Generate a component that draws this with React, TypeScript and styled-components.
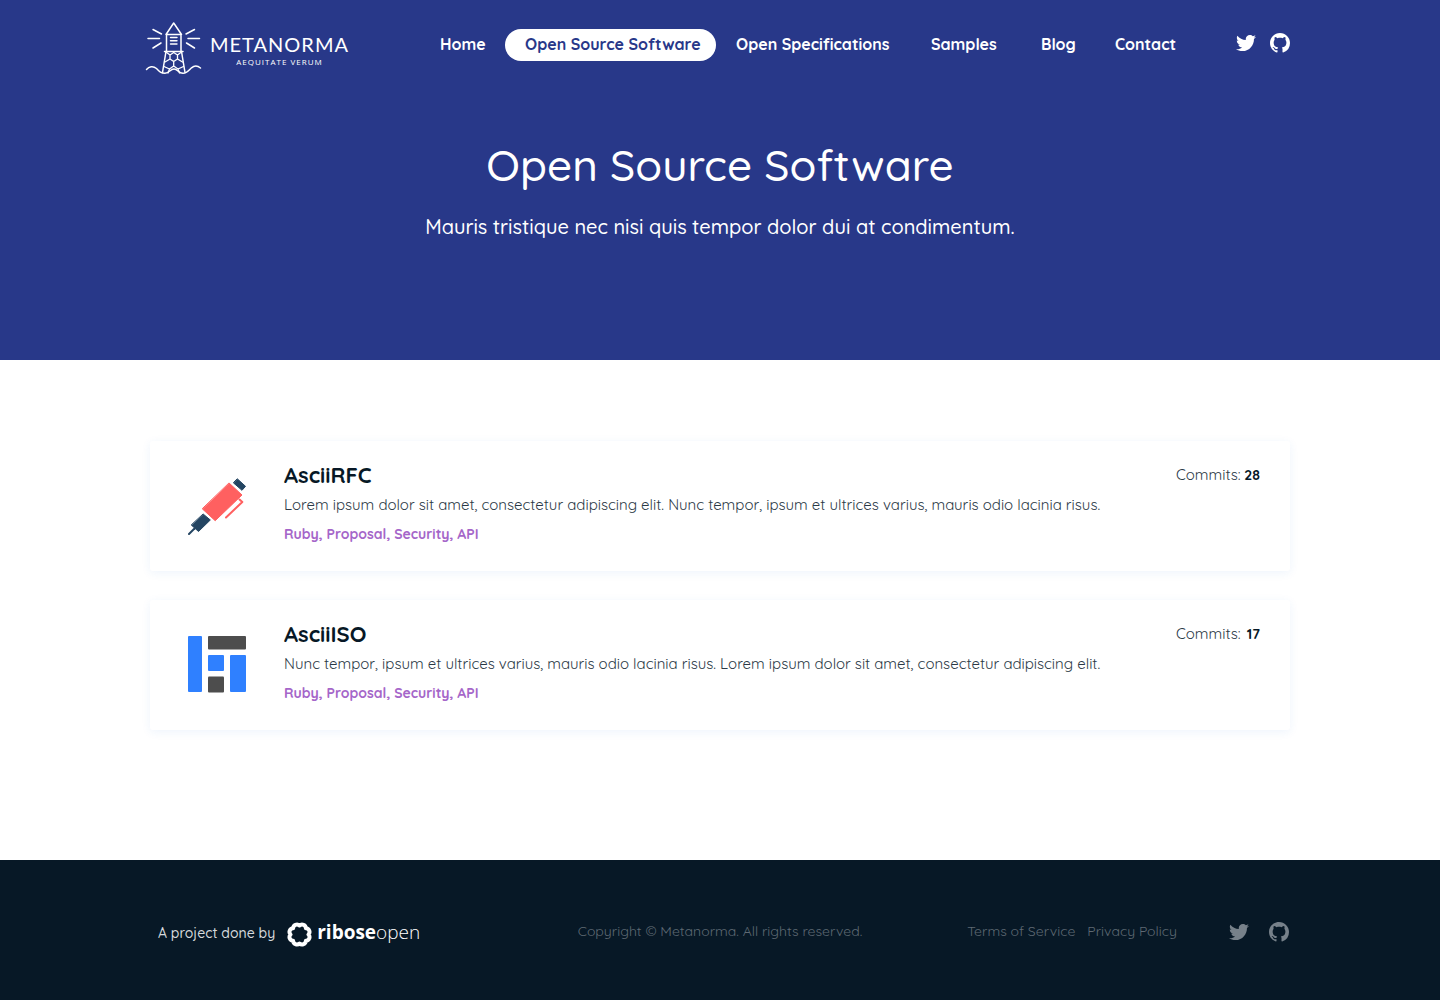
import React from 'react';
import styled, { createGlobalStyle, css } from 'styled-components';
import { FaTwitter } from 'react-icons/fa';

const sans = '"Quicksand", "Inter", "Liberation Sans", sans-serif';

const GlobalStyle = createGlobalStyle`
  *, *::before, *::after { box-sizing: border-box; }
  body { margin: 0; background: #fff; font-family: ${sans}; color: #071826; }
  h1, h2, p, ul { margin: 0; padding: 0; }
  a { color: inherit; text-decoration: none; }
`;

const Page = styled.div`
  min-height: 100vh;
  display: flex;
  flex-direction: column;
`;

const Container = styled.div`
  width: 100%;
  max-width: 1140px;
  margin: 0 auto;
`;

const Hero = styled.header`
  background: #283889;
  color: #fff;
  padding: 20px 16px 120px;
`;

const TopBar = styled(Container)`
  display: flex;
  align-items: flex-start;
`;

const Brand = styled.a`
  display: flex;
  gap: 8px;
`;

const Lighthouse = styled.svg`
  width: 52px;
  height: 56px;
  flex: none;
  overflow: visible;
  fill: none;
  stroke: #fff;
  stroke-width: 1.5;
  stroke-linecap: round;
  stroke-linejoin: round;
`;

const BrandText = styled.span`
  display: flex;
  flex-direction: column;
  align-items: center;
  padding-top: 12px;
`;

const BrandName = styled.span`
  font: 400 20px/24px "Lato", sans-serif;
  letter-spacing: 1px;
`;

const BrandMotto = styled.span`
  font: 400 8px/12px "Open Sans", sans-serif;
  letter-spacing: 1px;
`;

const Nav = styled.nav`
  display: grid;
  grid-template-columns: 85px 211px 195px 110px 74px 100px;
  margin-left: auto;
  padding-top: 9px;
`;

const NavLink = styled.a<{ $active?: boolean }>`
  padding: 0 0 2px 20px;
  border-radius: 16px;
  font-size: 16px;
  line-height: 30px;
  font-weight: 700;
  white-space: nowrap;
  ${(p) => p.$active && css`background: #fff; color: #283889;`}
`;

const Social = styled.div<{ $gap: number }>`
  display: flex;
  align-items: center;
  gap: ${(p) => p.$gap}px;
  a { display: block; height: 20px; }
  svg { display: block; width: 20px; height: 20px; fill: currentColor; }
`;

const TopSocial = styled(Social)`
  margin-left: 41px;
  padding-top: 13px;
`;

const HeroTitle = styled.h1`
  margin-top: 60px;
  font-size: 44px;
  line-height: 58px;
  font-weight: 500;
  text-align: center;
`;

const HeroLead = styled.p`
  margin-top: 20px;
  font-size: 20px;
  line-height: 26px;
  font-weight: 500;
  text-align: center;
`;

const Main = styled.main`
  flex: 1;
  padding: 81px 16px 130px;
`;

const ProjectList = styled(Container)`
  display: grid;
  gap: 29px;
`;

const Card = styled.article`
  display: grid;
  grid-template-columns: 58px 1fr auto;
  column-gap: 38px;
  min-height: 130px;
  padding: 20px 30px 20px 38px;
  border-radius: 3px;
  background: #fff;
  box-shadow: 0 2px 10px rgba(40, 110, 220, 0.08);
`;

const ProjectIcon = styled.svg`
  width: 58px;
  height: 58px;
  margin-top: 16px;
`;

const ProjectName = styled.h2`
  font-size: 22px;
  line-height: 28px;
  font-weight: 700;
`;

const ProjectText = styled.p`
  margin-top: 4px;
  font-size: 15px;
  line-height: 24px;
  font-weight: 400;
  color: #2b3946;
`;

const Tags = styled.p`
  margin-top: 8px;
  font-size: 14px;
  line-height: 18px;
  font-weight: 700;
  color: #a566c9;
`;

const Commits = styled.p`
  display: flex;
  justify-content: space-between;
  align-items: baseline;
  min-width: 84px;
  align-self: start;
  padding-top: 4px;
  font-size: 15px;
  line-height: 20px;
  font-weight: 400;
  color: #2b3946;
  b { font-size: 14px; font-weight: 700; color: #071826; }
`;

const Footer = styled.footer`
  background: #071826;
  padding: 57px 16px 53px;
`;

const FooterBar = styled(Container)`
  display: grid;
  grid-template-columns: 1fr auto 1fr;
  align-items: center;
  color: #5e6973;
  font-size: 14px;
  line-height: 20px;
  font-weight: 400;
`;

const Credit = styled.div`
  display: flex;
  align-items: center;
  gap: 12px;
  padding-left: 8px;
  color: #d5d9dc;
  font-weight: 500;
`;

const CreditLabel = styled.span`
  padding-top: 2px;
`;

const Copyright = styled.p`
  padding-bottom: 2px;
`;

const Ribose = styled.a`
  display: flex;
  align-items: flex-end;
  gap: 5px;
  color: #fff;
  font: 300 19px/30px "Open Sans", sans-serif;
  b { font-weight: 700; }
  svg { width: 25px; height: 25px; }
`;

const FooterRight = styled.div`
  display: flex;
  align-items: center;
  justify-content: flex-end;
  gap: 52px;
  padding-right: 1px;
`;

const Legal = styled.div`
  display: flex;
  gap: 12px;
  padding-bottom: 2px;
`;

const FooterSocial = styled(Social)`
  color: #77818a;
`;

function GithubMark() {
  return (
    <svg viewBox="0 0 16 16" aria-hidden="true">
      <path d="M8 0C3.58 0 0 3.58 0 8c0 3.54 2.29 6.53 5.47 7.59.4.07.55-.17.55-.38 0-.19-.01-.82-.01-1.49-2.01.37-2.53-.49-2.69-.94-.09-.23-.48-.94-.82-1.13-.28-.15-.68-.52-.01-.53.63-.01 1.08.58 1.23.82.72 1.21 1.87.87 2.33.66.07-.52.28-.87.51-1.07-1.78-.2-3.64-.89-3.64-3.95 0-.87.31-1.59.82-2.15-.08-.2-.36-1.02.08-2.12 0 0 .67-.21 2.2.82.64-.18 1.32-.27 2-.27s1.36.09 2 .27c1.53-1.04 2.2-.82 2.2-.82.44 1.1.16 1.92.08 2.12.51.56.82 1.27.82 2.15 0 3.07-1.87 3.75-3.65 3.95.29.25.54.73.54 1.48 0 1.07-.01 1.93-.01 2.2 0 .21.15.46.55.38A8.01 8.01 0 0 0 16 8c0-4.42-3.58-8-8-8z" />
    </svg>
  );
}

function SocialLinks() {
  return (
    <>
      <a href="#twitter" aria-label="Twitter"><FaTwitter /></a>
      <a href="#github" aria-label="GitHub"><GithubMark /></a>
    </>
  );
}

function LighthouseLogo() {
  return (
    <Lighthouse viewBox="0 0 52 56" aria-hidden="true">
      <path d="M16 14.500L23.700 3L31.500 14.500ZM16.500 14.500V31.500M31 14.500V31.500M14.500 31.500H33" />
      <path d="M20.500 17.500H27M20.500 20.700H27M20.500 24H27" strokeWidth="1.400" />
      <path d="M16 31.500L12.500 52.500M31.500 31.500L35 52.500" />
      <path d="M16 32L20 35V39L15 42M31.500 32L27.500 35V39L32.500 42M20 35L23.700 32.500L27.500 35M20 39L23.700 41.500L27.500 39M23.700 41.500V46L19.500 49L14 46.500M23.700 46L28 49L33.500 46.500M19.500 49L18 53M28 49L29.500 53" strokeWidth="1.300" />
      <path d="M3 9.500L11.500 14M-2 18.500H9.500M3 28L11 23M44.500 9.500L36 14M49.500 18.500H38M44.500 28L36.500 23" />
      <path d="M-3.500 49.500C-1 46.500 3 45.500 6.500 48.500C10 52 11 53.300 15 53.300C19.500 53.300 20 49 24 49C28 49 28 53.300 33 53.300C37 53.300 39 50 41.500 47.800C44.500 45.300 47.500 45.500 50.500 48" />
    </Lighthouse>
  );
}

function PenIcon() {
  return (
    <ProjectIcon viewBox="0 0 58 58" aria-hidden="true" strokeLinejoin="round" strokeLinecap="round">
      <g fill="#244562" stroke="#244562">
        <path d="M49.500 2L57.500 9.300L54 13.300L45.600 6Z" />
        <path d="M15.400 37.200L22.300 43L10.500 54.500L3.500 48.200Z" />
        <path d="M1 57L6.500 51.500" strokeWidth="2" />
      </g>
      <path d="M41.300 6.200L54 18L27.200 43.700L14.500 32Z" fill="#ff6060" stroke="#ff6060" />
      <path d="M51.500 22.500L54.300 25L38 40.500" fill="none" stroke="#ff6060" strokeWidth="2" />
    </ProjectIcon>
  );
}

function BlocksIcon() {
  return (
    <ProjectIcon viewBox="0 0 58 58" aria-hidden="true">
      <g fill="#2f80ff">
        <rect x="0" y="0" width="14" height="56" rx="1" />
        <rect x="20" y="19" width="16" height="16" rx="1" />
        <rect x="42" y="19" width="16" height="37" rx="1" />
      </g>
      <g fill="#4d4d4d">
        <rect x="20" y="0" width="38" height="13.500" rx="1" />
        <rect x="20" y="40.500" width="16" height="16" rx="1" />
      </g>
    </ProjectIcon>
  );
}

function RiboseMark() {
  const point = (i: number) => {
    const a = (Math.PI / 4) * i;
    return `${12.5 + Math.cos(a) * 9} ${12.5 + Math.sin(a) * 9}`;
  };
  const ring = `M${point(0)}` + [1, 2, 3, 4, 5, 6, 7, 8].map((i) => `A3.800 3.800 0 0 1 ${point(i)}`).join('') + 'Z';
  return (
    <svg viewBox="0 0 25 25" aria-hidden="true">
      <path d={ring} fill="none" stroke="#fff" strokeWidth="4" strokeLinejoin="round" />
    </svg>
  );
}

const navItems = ['Home', 'Open Source Software', 'Open Specifications', 'Samples', 'Blog', 'Contact'];

const projects = [
  {
    name: 'AsciiRFC',
    text: 'Lorem ipsum dolor sit amet, consectetur adipiscing elit. Nunc tempor, ipsum et ultrices varius, mauris odio lacinia risus.',
    commits: 28,
    icon: <PenIcon />,
  },
  {
    name: 'AsciiISO',
    text: 'Nunc tempor, ipsum et ultrices varius, mauris odio lacinia risus. Lorem ipsum dolor sit amet, consectetur adipiscing elit.',
    commits: 17,
    icon: <BlocksIcon />,
  },
];

export default function App() {
  return (
    <Page>
      <GlobalStyle />
      <Hero>
        <TopBar>
          <Brand href="#home">
            <LighthouseLogo />
            <BrandText>
              <BrandName>METANORMA</BrandName>
              <BrandMotto>AEQUITATE VERUM</BrandMotto>
            </BrandText>
          </Brand>
          <Nav>
            {navItems.map((item) => (
              <NavLink key={item} href="#nav" $active={item === 'Open Source Software'}>{item}</NavLink>
            ))}
          </Nav>
          <TopSocial $gap={14}><SocialLinks /></TopSocial>
        </TopBar>
        <HeroTitle>Open Source Software</HeroTitle>
        <HeroLead>Mauris tristique nec nisi quis tempor dolor dui at condimentum.</HeroLead>
      </Hero>
      <Main>
        <ProjectList>
          {projects.map((p) => (
            <Card key={p.name}>
              {p.icon}
              <div>
                <ProjectName>{p.name}</ProjectName>
                <ProjectText>{p.text}</ProjectText>
                <Tags>Ruby, Proposal, Security, API</Tags>
              </div>
              <Commits>Commits: <b>{p.commits}</b></Commits>
            </Card>
          ))}
        </ProjectList>
      </Main>
      <Footer>
        <FooterBar>
          <Credit>
            <CreditLabel>A project done by</CreditLabel>
            <Ribose href="#ribose"><RiboseMark /><span><b>ribose</b>open</span></Ribose>
          </Credit>
          <Copyright>Copyright © Metanorma. All rights reserved.</Copyright>
          <FooterRight>
            <Legal><a href="#terms">Terms of Service</a><a href="#privacy">Privacy Policy</a></Legal>
            <FooterSocial $gap={20}><SocialLinks /></FooterSocial>
          </FooterRight>
        </FooterBar>
      </Footer>
    </Page>
  );
}
